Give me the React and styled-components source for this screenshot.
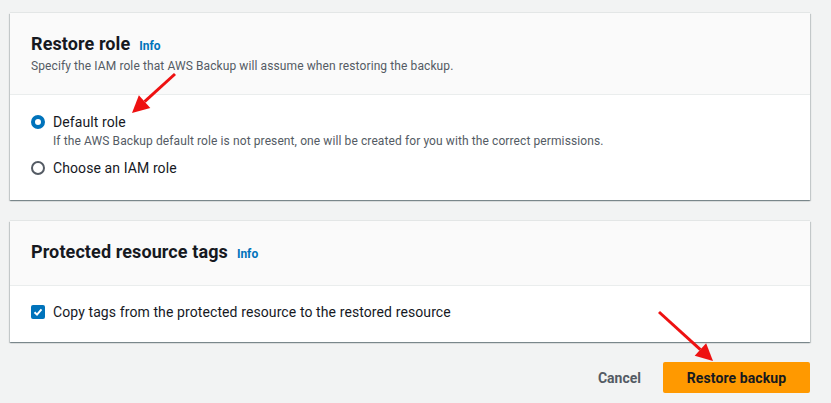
import React from 'react'
import styled, { createGlobalStyle } from 'styled-components'

const Global = createGlobalStyle`
  html, body {
    margin: 0;
    padding: 0;
    background: #f2f3f3;
    font-family: Roboto, "Liberation Sans", sans-serif;
    color: #16191f;
  }
`

const Page = styled.div`
  position: relative;
  width: 800px;
  padding: 13px 21px 10px 10px;
  display: flex;
  flex-direction: column;
  gap: 21px;
`

const Panel = styled.section`
  background: #fff;
  box-shadow: 0 1px 1px 0 rgba(0, 28, 36, 0.3), 1px 1px 1px 0 rgba(0, 28, 36, 0.15),
    -1px 1px 1px 0 rgba(0, 28, 36, 0.15), 0 -1px 0 0 rgba(0, 28, 36, 0.06);
`

const Header = styled.header`
  background: #fafafa;
  border-bottom: 1px solid #eaeded;
  padding: 20px 20px 20px 21px;
`

const Title = styled.h2`
  margin: 0;
  font-size: 18px;
  line-height: 22px;
  font-weight: 700;
  letter-spacing: 0.1px;
  display: flex;
  align-items: baseline;
  gap: 9px;
`

const Info = styled.a`
  font-size: 12px;
  font-weight: 700;
  letter-spacing: 0;
  color: #0073bb;
  text-decoration: none;
`

const Description = styled.p`
  margin: 1px 0 0;
  font-size: 12px;
  line-height: 16px;
  letter-spacing: 0.1px;
  color: #545b64;
`

const Body = styled.div`
  padding: ${(p) => p.$pad};
  display: flex;
  flex-direction: column;
  gap: 9px;
`

const Option = styled.label`
  display: grid;
  grid-template-columns: 14px 1fr;
  column-gap: 8px;
  align-items: center;
  font-size: 14px;
  line-height: 20px;
  letter-spacing: 0.1px;
`

const Radio = styled.span`
  width: 14px;
  height: 14px;
  box-sizing: border-box;
  border-radius: 50%;
  border: ${(p) => (p.$checked ? '4px solid #0073bb' : '2px solid #545b64')};
  background: #fff;
`

const Check = styled.span`
  width: 14px;
  height: 14px;
  border-radius: 2px;
  background: #0073bb;
  display: flex;
  align-items: center;
  justify-content: center;
`

const Hint = styled.span`
  grid-column: 2;
  font-size: 12px;
  line-height: 16px;
  color: #545b64;
  margin-top: 1px;
`

const Footer = styled.div`
  display: flex;
  justify-content: flex-end;
  align-items: center;
  gap: 22px;
  margin-top: -1px;
`

const LinkButton = styled.button`
  background: none;
  border: none;
  font: 700 14px/20px Roboto, "Liberation Sans", sans-serif;
  color: #545b64;
  padding: 0;
`

const PrimaryButton = styled.button`
  width: 147px;
  height: 31px;
  background: #ff9900;
  border: none;
  border-radius: 2px;
  font: 700 14px/20px Roboto, "Liberation Sans", sans-serif;
  letter-spacing: 0.1px;
  color: #16191f;
`

const Annotation = styled.svg`
  position: absolute;
  left: 0;
  top: 0;
  pointer-events: none;
`

const Arrow = ({ x1, y1, x2, y2 }) => {
  const a = Math.atan2(y2 - y1, x2 - x1)
  const len = 17
  const w = 8.5
  const bx = x2 - len * Math.cos(a)
  const by = y2 - len * Math.sin(a)
  const px = -Math.sin(a) * w
  const py = Math.cos(a) * w
  return (
    <g>
      <line x1={x1} y1={y1} x2={bx} y2={by} stroke="#ee1111" strokeWidth="3" />
      <polygon points={`${x2},${y2} ${bx + px},${by + py} ${bx - px},${by - py}`} fill="#ee1111" />
    </g>
  )
}

export default function App() {
  return (
    <>
      <Global />
      <Page>
        <Panel>
          <Header>
            <Title>
              Restore role <Info href="#">Info</Info>
            </Title>
            <Description>
              Specify the IAM role that AWS Backup will assume when restoring the backup.
            </Description>
          </Header>
          <Body $pad="17px 20px 22px 21px">
            <Option>
              <Radio $checked />
              Default role
              <Hint>
                If the AWS Backup default role is not present, one will be created for you with the correct permissions.
              </Hint>
            </Option>
            <Option>
              <Radio />
              Choose an IAM role
            </Option>
          </Body>
        </Panel>
        <Panel>
          <Header>
            <Title>
              Protected resource tags <Info href="#">Info</Info>
            </Title>
          </Header>
          <Body $pad="16px 20px 20px 21px">
            <Option>
              <Check>
                <svg width="10" height="10" viewBox="0 0 10 10">
                  <path d="M1.5 5.2 L4 7.6 L8.5 2.4" fill="none" stroke="#fff" strokeWidth="2" />
                </svg>
              </Check>
              Copy tags from the protected resource to the restored resource
            </Option>
          </Body>
        </Panel>
        <Footer>
          <LinkButton>Cancel</LinkButton>
          <PrimaryButton>Restore backup</PrimaryButton>
        </Footer>
        <Annotation width="831" height="403">
          <Arrow x1={175} y1={74} x2={132} y2={113} />
          <Arrow x1={659} y1={312} x2={713} y2={361} />
        </Annotation>
      </Page>
    </>
  )
}
